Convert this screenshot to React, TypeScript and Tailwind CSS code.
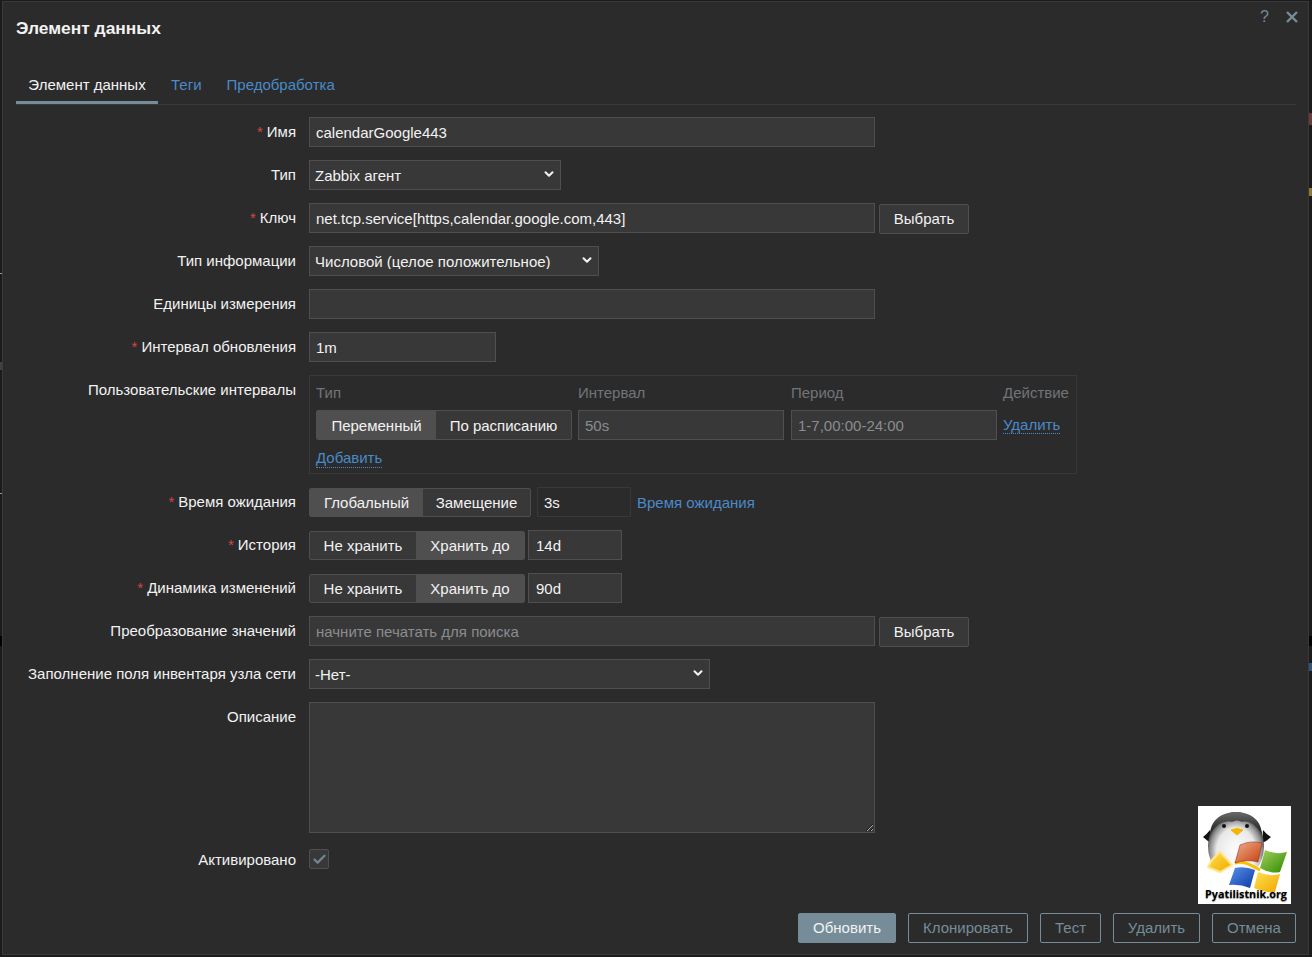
import React from 'react';
import { Check, ChevronDown } from 'lucide-react';

const fieldCls =
  'h-[30px] border border-[#4f4f4f] bg-[#383838] px-[6px] text-[15px] text-[#f2f2f2] outline-none placeholder:text-[#8a8d90]';

function Label({ text, required, short }: { text: string; required?: boolean; short?: boolean }) {
  return (
    <div
      className={`flex items-center justify-end text-right whitespace-nowrap ${short ? 'h-[26px]' : 'h-[30px] pb-[2px]'}`}
    >
      {required && <span className="mr-[4px] text-[#d64545]">*</span>}
      {text}
    </div>
  );
}

function SelectBox({ value, width }: { value: string; width: string }) {
  return (
    <div className={`relative h-[30px] ${width}`}>
      <select
        defaultValue={value}
        className="h-full w-full appearance-none border border-[#4f4f4f] bg-[#383838] px-[5px] text-[15px] text-[#f2f2f2] outline-none"
      >
        <option>{value}</option>
      </select>
      <ChevronDown
        size={14}
        strokeWidth={3.5}
        className="pointer-events-none absolute right-[5px] top-[7px] text-[#f2f2f2]"
      />
    </div>
  );
}

function Segments({
  items,
  active,
  widths,
  height = 'h-[30px]',
}: {
  items: string[];
  active: number;
  widths: string[];
  height?: string;
}) {
  return (
    <div className={`flex w-fit self-end overflow-hidden rounded-[2px] border border-[#4f4f4f] ${height}`}>
      {items.map((item, i) => (
        <div
          key={item}
          className={`flex items-center justify-center text-[#f2f2f2] ${widths[i]} ${
            i === active ? 'bg-[#4f4f4f]' : 'bg-[#383838]'
          }`}
        >
          {item}
        </div>
      ))}
    </div>
  );
}

function PlainButton({ children }: { children: React.ReactNode }) {
  return (
    <button className="h-[30px] w-[90px] translate-y-[1px] rounded-[2px] border border-[#4f4f4f] bg-[#383838] pb-[2px] text-[#f2f2f2]">
      {children}
    </button>
  );
}

function FooterButton({ text, width, primary }: { text: string; width: string; primary?: boolean }) {
  return (
    <button
      className={`h-[30px] rounded-[2px] border border-[#768d99] pb-[1px] ${width} ${
        primary ? 'bg-[#768d99] text-[#f2f2f2]' : 'text-[#768d99]'
      }`}
    >
      {text}
    </button>
  );
}

function Logo() {
  return (
    <div className="absolute left-[1198px] top-[806px] h-[98px] w-[93px] bg-white">
      <svg viewBox="0 0 93 98" className="block h-[98px] w-[93px]">
        <defs>
          <radialGradient id="belly" cx="50%" cy="58%" r="56%">
            <stop offset="0%" stopColor="#ffffff" />
            <stop offset="62%" stopColor="#e8e8e8" />
            <stop offset="84%" stopColor="#8a8a8a" />
            <stop offset="100%" stopColor="#161616" />
          </radialGradient>
          <linearGradient id="cap" x1="0" y1="0" x2="0" y2="1">
            <stop offset="0%" stopColor="#6a6a6a" />
            <stop offset="100%" stopColor="#1a1a1a" />
          </linearGradient>
          <linearGradient id="fade" x1="0" y1="0" x2="0" y2="1">
            <stop offset="0%" stopColor="#ffffff" stopOpacity="0" />
            <stop offset="60%" stopColor="#ffffff" stopOpacity="1" />
          </linearGradient>
          <linearGradient id="red" x1="0" y1="0" x2="1" y2="1">
            <stop offset="0%" stopColor="#eeb090" />
            <stop offset="100%" stopColor="#c83c08" />
          </linearGradient>
          <linearGradient id="green" x1="0" y1="0" x2="1" y2="1">
            <stop offset="0%" stopColor="#a8d060" />
            <stop offset="100%" stopColor="#2c8a00" />
          </linearGradient>
          <linearGradient id="blue" x1="0" y1="0" x2="1" y2="1">
            <stop offset="0%" stopColor="#5a90e8" />
            <stop offset="100%" stopColor="#0c3aa8" />
          </linearGradient>
          <linearGradient id="yellow" x1="0" y1="0" x2="1" y2="1">
            <stop offset="0%" stopColor="#ffe050" />
            <stop offset="100%" stopColor="#f0a800" />
          </linearGradient>
        </defs>
        <path d="M12 24 Q8 29 5 31 Q9 35 14 37 Z" fill="#111" />
        <path d="M65 24 Q69 29 73 31 Q69 35 64 37 Z" fill="#111" />
        <ellipse cx="38" cy="40" rx="28" ry="34" fill="url(#belly)" />
        <path
          d="M12 28 C13 12 26 6 38 6 C50 6 63 12 64 28 C58 18 50 14 44 16 Q39 13 34 16 C26 14 18 18 12 28 Z"
          fill="url(#cap)"
        />
        <rect x="5" y="50" width="66" height="30" fill="url(#fade)" />
        <circle cx="26" cy="20" r="2" fill="#111" />
        <circle cx="49" cy="20" r="2" fill="#111" />
        <path d="M33 24 Q39 21 45 24 L39 29 Z" fill="#f5b400" stroke="#f5b400" strokeLinejoin="round" />
        <path
          d="M22 46 L34 59 L22 66 L10 61 L14 54 Z"
          fill="url(#yellow)"
          stroke="#ffe680"
          strokeWidth="2"
          strokeLinejoin="round"
        />
        <path d="M37 57 C46 54 54 60 62 64" fill="none" stroke="#f5c400" strokeWidth="3" />
        <path d="M42 39 Q53 34 64 37 L60 56 Q48 53 37 57 Z" fill="url(#red)" stroke="#8a1a10" strokeWidth="0.5" />
        <path d="M67 44 Q78 49 89 46 L82 66 Q72 68 62 62 Z" fill="url(#green)" />
        <path d="M37 62 Q47 60 57 64 L52 82 Q42 78 31 79 Z" fill="url(#blue)" />
        <path d="M60 66 Q71 71 82 68 L77 86 Q67 87 56 82 Z" fill="url(#yellow)" />
      </svg>
      <span
        className="absolute left-[7px] top-[81px] whitespace-nowrap text-[10.8px] font-bold leading-[14px] text-black"
        style={{ fontFamily: '"Open Sans", sans-serif', textShadow: '0 1px 1px rgba(0,0,0,0.45)' }}
      >
        Pyatilistnik.org
      </span>
    </div>
  );
}

// bits of the page that stay visible around the modal
function Slivers() {
  return (
    <>
      <div className="absolute left-[1309px] top-[113px] h-[12px] w-[3px] bg-[#6d3a3a]" />
      <div className="absolute left-[1309px] top-[188px] h-[8px] w-[3px] bg-[#8c7a3a]" />
      <div className="absolute left-[1309px] top-[636px] h-[10px] w-[3px] bg-black" />
      <div className="absolute left-[1309px] top-[663px] h-[8px] w-[3px] bg-[#2f5580]" />
      <div className="absolute left-0 top-[273px] h-[1px] w-[2px] bg-[#9a9a9a]" />
      <div className="absolute left-0 top-[362px] h-[8px] w-[2px] bg-[#4a3f38]" />
      <div className="absolute left-0 top-[493px] h-[1px] w-[2px] bg-[#9a9a9a]" />
      <div className="absolute left-0 top-[636px] h-[10px] w-[2px] bg-black" />
    </>
  );
}

export default function App() {
  return (
    <div
      className="relative h-[957px] w-[1312px] overflow-hidden bg-[#1b1b1b] pl-[2px] pt-[1px] text-[15px] leading-none text-[#f2f2f2]"
      style={{ fontFamily: '"Liberation Sans", Arial, sans-serif' }}
    >
      <Slivers />
      <div className="relative flex h-[954px] w-[1307px] flex-col border border-[#3a3a3a] bg-[#2b2b2b] pl-[13px] pr-[12px]">
        <div className="flex h-[63px] items-start justify-between">
          <h1 className="mt-[18px] text-[17.4px] font-bold text-[#f2f2f2]">Элемент данных</h1>
          <div className="mt-[7px] -mr-[2px] flex items-center gap-[17px] text-[#768d99]">
            <span className="text-[16px]">?</span>
            <svg viewBox="0 0 12 12" className="h-[12px] w-[12px]" fill="none" stroke="currentColor" strokeWidth="2.4">
              <path d="M1 1 L11 11 M11 1 L1 11" />
            </svg>
          </div>
        </div>

        <div className="flex h-[40px] items-stretch border-b border-[#383838]">
          <div className="flex w-[142px] items-center justify-center border-b-[3px] border-[#768d99] pt-[3px]">
            Элемент данных
          </div>
          <div className="flex items-center pl-[13px] text-[#4a8ac8]">Теги</div>
          <div className="flex items-center pl-[25px] text-[#4a8ac8]">Предобработка</div>
        </div>

        <div className="mt-[12px] grid grid-cols-[280px_1fr] gap-x-[13px] gap-y-[13px]">
          <Label text="Имя" required />
          <input className={`${fieldCls} w-[566px]`} defaultValue="calendarGoogle443" />

          <Label text="Тип" />
          <SelectBox value="Zabbix агент" width="w-[252px]" />

          <Label text="Ключ" required />
          <div className="flex gap-[4px]">
            <input className={`${fieldCls} w-[566px]`} defaultValue="net.tcp.service[https,calendar.google.com,443]" />
            <PlainButton>Выбрать</PlainButton>
          </div>

          <Label text="Тип информации" />
          <SelectBox value="Числовой (целое положительное)" width="w-[290px]" />

          <Label text="Единицы измерения" />
          <input className={`${fieldCls} w-[566px]`} />

          <Label text="Интервал обновления" required />
          <input className={`${fieldCls} w-[187px]`} defaultValue="1m" />

          <Label text="Пользовательские интервалы" />
          <div className="grid h-[99px] w-[768px] grid-cols-[262px_213px_212px_auto] content-start border border-[#383838] px-[6px] pt-[8px] text-[#70757a]">
            <div className="h-[26px] pt-[1px]">Тип</div>
            <div className="h-[26px] pt-[1px]">Интервал</div>
            <div className="h-[26px] pt-[1px]">Период</div>
            <div className="h-[26px] pt-[1px] whitespace-nowrap">Действие</div>
            <Segments items={['Переменный', 'По расписанию']} active={0} widths={['w-[119px]', 'w-[135px]']} />
            <input className={`${fieldCls} w-[206px] !text-[#8a8d90]`} defaultValue="50s" />
            <input className={`${fieldCls} w-[206px] !text-[#8a8d90]`} defaultValue="1-7,00:00-24:00" />
            <div className="mt-[1px] flex items-center">
              <a className="border-b border-dotted border-[#4a8ac8] pb-[1px] text-[#4a8ac8]">Удалить</a>
            </div>
            <div className="col-span-4 mt-[10px]">
              <a className="border-b border-dotted border-[#4a8ac8] pb-[1px] text-[#4a8ac8]">Добавить</a>
            </div>
          </div>

          <Label text="Время ожидания" required />
          <div className="flex items-center gap-[6px]">
            <Segments
              items={['Глобальный', 'Замещение']}
              active={0}
              widths={['w-[113px]', 'w-[107px]']}
              height="h-[29px]"
            />
            <input
              className="h-[30px] w-[94px] border border-[#383838] bg-[#2b2b2b] px-[6px] text-[15px] text-[#f2f2f2] outline-none"
              defaultValue="3s"
            />
            <a className="text-[#4a8ac8]">Время ожидания</a>
          </div>

          <Label text="История" required />
          <div className="flex gap-[3px]">
            <Segments
              items={['Не хранить', 'Хранить до']}
              active={1}
              widths={['w-[106px]', 'w-[108px]']}
              height="h-[29px]"
            />
            <input className={`${fieldCls} w-[94px] !px-[7px]`} defaultValue="14d" />
          </div>

          <Label text="Динамика изменений" required />
          <div className="flex gap-[3px]">
            <Segments
              items={['Не хранить', 'Хранить до']}
              active={1}
              widths={['w-[106px]', 'w-[108px]']}
              height="h-[29px]"
            />
            <input className={`${fieldCls} w-[94px] !px-[7px]`} defaultValue="90d" />
          </div>

          <Label text="Преобразование значений" />
          <div className="flex gap-[4px]">
            <input className={`${fieldCls} w-[566px]`} placeholder="начните печатать для поиска" />
            <PlainButton>Выбрать</PlainButton>
          </div>

          <Label text="Заполнение поля инвентаря узла сети" />
          <SelectBox value="-Нет-" width="w-[401px]" />

          <Label text="Описание" />
          <textarea className="h-[131px] w-[566px] border border-[#4f4f4f] bg-[#383838] text-[#f2f2f2] outline-none [color-scheme:dark]" />

          <Label text="Активировано" short />
          <div className="flex h-[26px] items-center">
            <div className="flex h-[20px] w-[20px] items-center justify-center rounded-[2px] border border-[#4f4f4f] bg-[#383838]">
              <Check size={15} strokeWidth={3.5} className="text-[#6f8794]" />
            </div>
          </div>
        </div>

        <div className="mt-auto mb-[11px] flex justify-end gap-[12px]">
          <FooterButton text="Обновить" width="w-[98px]" primary />
          <FooterButton text="Клонировать" width="w-[120px]" />
          <FooterButton text="Тест" width="w-[61px]" />
          <FooterButton text="Удалить" width="w-[87px]" />
          <FooterButton text="Отмена" width="w-[84px]" />
        </div>
      </div>
      <Logo />
    </div>
  );
}
